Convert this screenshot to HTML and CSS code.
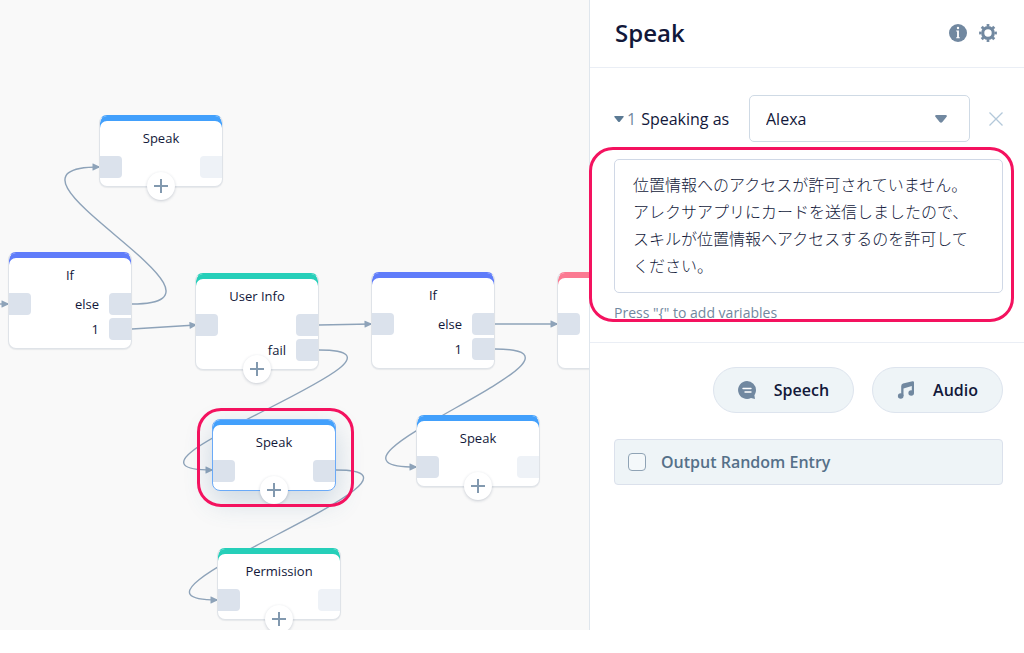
FILE: index.html
```html
<!DOCTYPE html>
<html lang="ja">
<head>
    <meta charset="UTF-8">
    <meta name="viewport" content="width=device-width, initial-scale=1.0">
    <title>Skill Editor</title>
    <link rel="stylesheet" href="styles.css">
</head>
<body>
    <div class="app">
        <main class="canvas">
            <!-- Links between blocks -->
            <svg class="links" aria-hidden="true">
                <defs>
                    <marker id="arrow" viewBox="0 0 8 8" refX="7" refY="4" markerWidth="8" markerHeight="8" markerUnits="userSpaceOnUse" orient="auto">
                        <path d="M.5 .8Q.5 .4 1 .6L7.4 3.6Q8 4 7.4 4.4L1 7.4Q.5 7.6 .5 7.2Z"/>
                    </marker>
                </defs>
                <path class="link" d="M0 304H8"/>
                <path class="link" d="M132 304C262 304 -31 167 99 167"/>
                <path class="link" d="M132 329L196 325"/>
                <path class="link" d="M319 325L371 324"/>
                <path class="link" d="M319 350C449 350 82 470 212 470"/>
                <path class="link" d="M495 324H557"/>
                <path class="link" d="M495 349C625 349 286 467 416 467"/>
                <path class="link" d="M336 470C466 470 87 600 217 600"/>
            </svg>

            <div class="node blue speak-1">
                <h3>Speak</h3>
                <div class="ports">
                    <span class="port in"></span>
                    <div class="outs">
                        <div class="out"><span class="port empty"></span></div>
                    </div>
                </div>
                <button class="add" aria-label="Add block"></button>
            </div>

            <div class="node indigo if-1">
                <h3>If</h3>
                <div class="ports">
                    <span class="port in"></span>
                    <div class="outs">
                        <div class="out">else<span class="port"></span></div>
                        <div class="out">1<span class="port"></span></div>
                    </div>
                </div>
            </div>

            <div class="node green user-info">
                <h3>User Info</h3>
                <div class="ports">
                    <span class="port in"></span>
                    <div class="outs">
                        <div class="out"><span class="port"></span></div>
                        <div class="out">fail<span class="port"></span></div>
                    </div>
                </div>
                <button class="add" aria-label="Add block"></button>
            </div>

            <div class="node indigo if-2">
                <h3>If</h3>
                <div class="ports">
                    <span class="port in"></span>
                    <div class="outs">
                        <div class="out">else<span class="port"></span></div>
                        <div class="out">1<span class="port"></span></div>
                    </div>
                </div>
            </div>

            <div class="node red next">
                <h3>&nbsp;</h3>
                <div class="ports">
                    <span class="port in"></span>
                    <div class="outs">
                        <div class="out"><span class="port"></span></div>
                        <div class="out"><span class="port"></span></div>
                    </div>
                </div>
            </div>

            <div class="node blue speak-2 selected">
                <h3>Speak</h3>
                <div class="ports">
                    <span class="port in"></span>
                    <div class="outs">
                        <div class="out"><span class="port"></span></div>
                    </div>
                </div>
                <button class="add" aria-label="Add block"></button>
            </div>

            <div class="node blue speak-3">
                <h3>Speak</h3>
                <div class="ports">
                    <span class="port in"></span>
                    <div class="outs">
                        <div class="out"><span class="port empty"></span></div>
                    </div>
                </div>
                <button class="add" aria-label="Add block"></button>
            </div>

            <div class="node green permission">
                <h3>Permission</h3>
                <div class="ports">
                    <span class="port in"></span>
                    <div class="outs">
                        <div class="out"><span class="port empty"></span></div>
                    </div>
                </div>
                <button class="add" aria-label="Add block"></button>
            </div>

            <div class="callout callout-node"></div>
        </main>

        <aside class="panel">
            <header class="panel-header">
                <h1>Speak</h1>
                <button class="icon-btn" aria-label="Info">
                    <svg width="18" height="18" viewBox="0 0 18 18">
                        <circle cx="9" cy="9" r="9" fill="#7188a0"/>
                        <circle cx="9" cy="4" r="1.2" fill="#fff"/>
                        <path d="M7.2 6.600h2.700v6.600h.9v1H7.200v-1h.9V7.600h-.9z" fill="#fff"/>
                    </svg>
                </button>
                <button class="icon-btn" aria-label="Settings">
                    <svg width="18" height="18" viewBox="0 0 18 18" fill="none" stroke="#7188a0">
                        <circle cx="9" cy="9" r="5.3" stroke-width="3.2"/>
                        <circle cx="9" cy="9" r="7.8" stroke-width="2.2" pathLength="16" stroke-dasharray=".9 1.1" stroke-dashoffset=".45"/>
                    </svg>
                </button>
            </header>

            <section class="entry">
                <div class="entry-head">
                    <svg class="caret" width="10" height="6" viewBox="0 0 10 6"><path d="M1 0h8q1.4 0 .6 1L6 5.4q-1 1-2 0L.4 1Q-.4 0 1 0z" fill="#5b7a94"/></svg>
                    <span class="index">1</span>
                    <label for="voice">Speaking as</label>
                    <div class="select">
                        <select id="voice">
                            <option>Alexa</option>
                        </select>
                        <svg width="12" height="8" viewBox="0 0 12 8"><path d="M1.4 0h9.2q1.9.3 1 1.8L7.4 7q-1.4 1.5-2.8 0L.4 1.8Q-.5.3 1.4 0z" fill="#7188a0"/></svg>
                    </div>
                    <button class="icon-btn remove" aria-label="Remove">
                        <svg width="14" height="14" viewBox="0 0 14 14"><path d="M.5.5l13 13M13.5.5l-13 13" stroke="#b3c8da" stroke-width="1.3"/></svg>
                    </button>
                </div>
                <div class="message">
                    <textarea id="message" rows="4" aria-label="Message" spellcheck="false">位置情報へのアクセスが許可されていません。
アレクサアプリにカードを送信しましたので、
スキルが位置情報へアクセスするのを許可して
ください。</textarea>
                    <p class="hint">Press "{" to add variables</p>
                    <div class="callout callout-message"></div>
                </div>
            </section>

            <section class="actions">
                <div class="buttons">
                    <button class="pill">
                        <svg width="18" height="18" viewBox="0 0 18 18">
                            <path d="M9 0a9 9 0 0 1 9 9c0 2-.6 3.700-1.600 5.200L17 18l-4-.9A9 9 0 1 1 9 0z" fill="#7188a0"/>
                            <path d="M5 7.500h8M7 11h6" stroke="#fff" stroke-width="1.400" stroke-linecap="round"/>
                        </svg>
                        Speech
                    </button>
                    <button class="pill">
                        <svg width="18" height="18" viewBox="0 0 18 18" fill="#7188a0">
                            <path d="M4.200 5.200Q4.200 3.200 6 2.500L15.500.2Q17 0 17 1.200V12h-2.200V5L6.500 7.500V15H4.200z"/>
                            <circle cx="3.700" cy="15" r="2.800"/>
                            <circle cx="14.200" cy="12" r="2.800"/>
                        </svg>
                        Audio
                    </button>
                </div>
                <label class="option">
                    <input type="checkbox">
                    Output Random Entry
                </label>
            </section>
        </aside>
    </div>
</body>
</html>
```
FILE: styles.css
```css
* {
    margin: 0;
    padding: 0;
    box-sizing: border-box;
}

body {
    font-family: 'Open Sans', 'Noto Sans CJK JP', sans-serif;
    font-size: 16px;
    line-height: 24px;
    color: #12183a;
    background: #fff;
}

button, select, textarea {
    font: inherit;
    color: inherit;
}

button {
    border: none;
    background: none;
    cursor: pointer;
}

svg {
    display: block;
}

.app {
    display: flex;
    height: 100vh;
    padding-bottom: 23px;
}

/* Canvas */
.canvas {
    position: relative;
    flex: 1;
    overflow: hidden;
    background: #f9f9f9;
}

.links {
    position: absolute;
    inset: 0;
    width: 100%;
    height: 100%;
}

.link {
    fill: none;
    stroke: #8ea3b9;
    stroke-width: 1.4;
    marker-end: url(#arrow);
}

.links marker {
    fill: #8ea3b9;
}

.node {
    position: absolute;
    width: 124px;
    padding: 13px 0 8px;
    border: 1px solid #dfe3e8;
    border-radius: 8px;
    background: #fff;
    font-size: 13px;
    line-height: 18px;
    box-shadow: inset 0 5px 0 var(--accent), 0 1px 1px rgba(30, 50, 80, 0.08);
}

.node h3 {
    margin-bottom: 9px;
    font-size: 13px;
    font-weight: 400;
    text-align: center;
}

.blue { --accent: #42a0fc; }
.indigo { --accent: #5f7cfa; }
.green { --accent: #26cfb9; }
.red { --accent: #fb7a92; }

.blue, .indigo, .green, .red {
    border-top-color: var(--accent);
}

.speak-1 { left: 99px; top: 115px; }
.if-1 { left: 8px; top: 252px; }
.user-info { left: 195px; top: 273px; }
.if-2 { left: 371px; top: 272px; }
.next { left: 557px; top: 272px; }
.speak-2 { left: 212px; top: 419px; }
.speak-3 { left: 416px; top: 415px; }
.permission { left: 217px; top: 548px; }

.selected {
    border-color: #6aaaf8;
    box-shadow: inset 0 5px 0 var(--accent), 0 10px 28px rgba(60, 110, 150, 0.24);
}

.ports {
    display: flex;
    justify-content: space-between;
    align-items: flex-start;
}

.port {
    width: 22px;
    height: 22px;
    border-radius: 4px 0 0 4px;
    background: #dbe2ec;
}

.port.in {
    border-radius: 0 4px 4px 0;
}

.port.empty {
    background: #eef2f7;
}

.outs {
    display: flex;
    flex-direction: column;
    gap: 3px;
}

.out {
    display: flex;
    justify-content: flex-end;
    align-items: center;
    gap: 10px;
}

.add {
    position: absolute;
    left: 50%;
    bottom: -14px;
    width: 28px;
    height: 28px;
    margin-left: -14px;
    border-radius: 50%;
    background:
        linear-gradient(#8299af, #8299af) center / 14px 2px no-repeat,
        linear-gradient(#8299af, #8299af) center / 2px 14px no-repeat,
        #fff;
    box-shadow: 0 1px 3px rgba(30, 50, 80, 0.22);
}

/* Highlight frames */
.callout {
    position: absolute;
    border: 3px solid #f4125f;
    border-radius: 24px;
    pointer-events: none;
}

.callout-node {
    left: 197px;
    top: 408px;
    width: 157px;
    height: 99px;
}

.callout-message {
    left: -25px;
    right: -11px;
    top: -12px;
    bottom: 0;
}

/* Side panel */
.panel {
    position: relative;
    width: 435px;
    flex-shrink: 0;
    border-left: 1px solid #dfe6ed;
    background: #fff;
}

.panel-header {
    display: flex;
    align-items: center;
    gap: 12px;
    height: 68px;
    padding: 0 27px 2px 25px;
    border-bottom: 1px solid #eaeef5;
}

.panel-header h1 {
    flex: 1;
    font-size: 24px;
    line-height: 32px;
    font-weight: 600;
}

.entry {
    padding: 27px 21px 20px 24px;
    border-bottom: 1px solid #eaeef5;
}

.entry-head {
    display: flex;
    align-items: center;
    margin-bottom: 17px;
}

.index {
    margin: 0 5px 0 3px;
    color: #7188a0;
}

.select {
    position: relative;
    width: 221px;
    margin: 0 19px 0 auto;
}

.select select {
    width: 100%;
    height: 47px;
    padding: 0 16px;
    border: 1px solid #cfdae5;
    border-radius: 5px;
    background: #fff;
    appearance: none;
}

.select svg {
    position: absolute;
    right: 23px;
    top: 20px;
    pointer-events: none;
}

.message {
    position: relative;
}

textarea {
    display: block;
    width: 100%;
    padding: 12px 16px 12px 18px;
    border: 1px solid #d0d8e6;
    border-radius: 5px;
    font-weight: 300;
    line-height: 27px;
    overflow: hidden;
    resize: none;
}

.hint {
    padding-top: 11px;
    font-size: 14px;
    line-height: 18px;
    color: #7188a0;
}

.actions {
    padding: 24px 21px 24px 24px;
}

.buttons {
    display: flex;
    justify-content: flex-end;
    gap: 18px;
    margin-bottom: 26px;
}

.pill {
    display: flex;
    align-items: center;
    gap: 18px;
    height: 46px;
    padding: 0 24px;
    border: 1px solid #dde4ee;
    border-radius: 23px;
    background: #eef4f7;
    font-weight: 600;
}

.option {
    display: flex;
    align-items: center;
    gap: 15px;
    height: 46px;
    padding: 0 13px;
    border: 1px solid #dbe1ec;
    border-radius: 4px;
    background: #eef4f7;
    font-weight: 600;
    color: #557089;
}

.option input {
    width: 18px;
    height: 18px;
    border: 1px solid #8fa3b5;
    border-radius: 4px;
    background: #f4f8fa;
    appearance: none;
}

.option input:checked {
    background: #557089;
}
```
